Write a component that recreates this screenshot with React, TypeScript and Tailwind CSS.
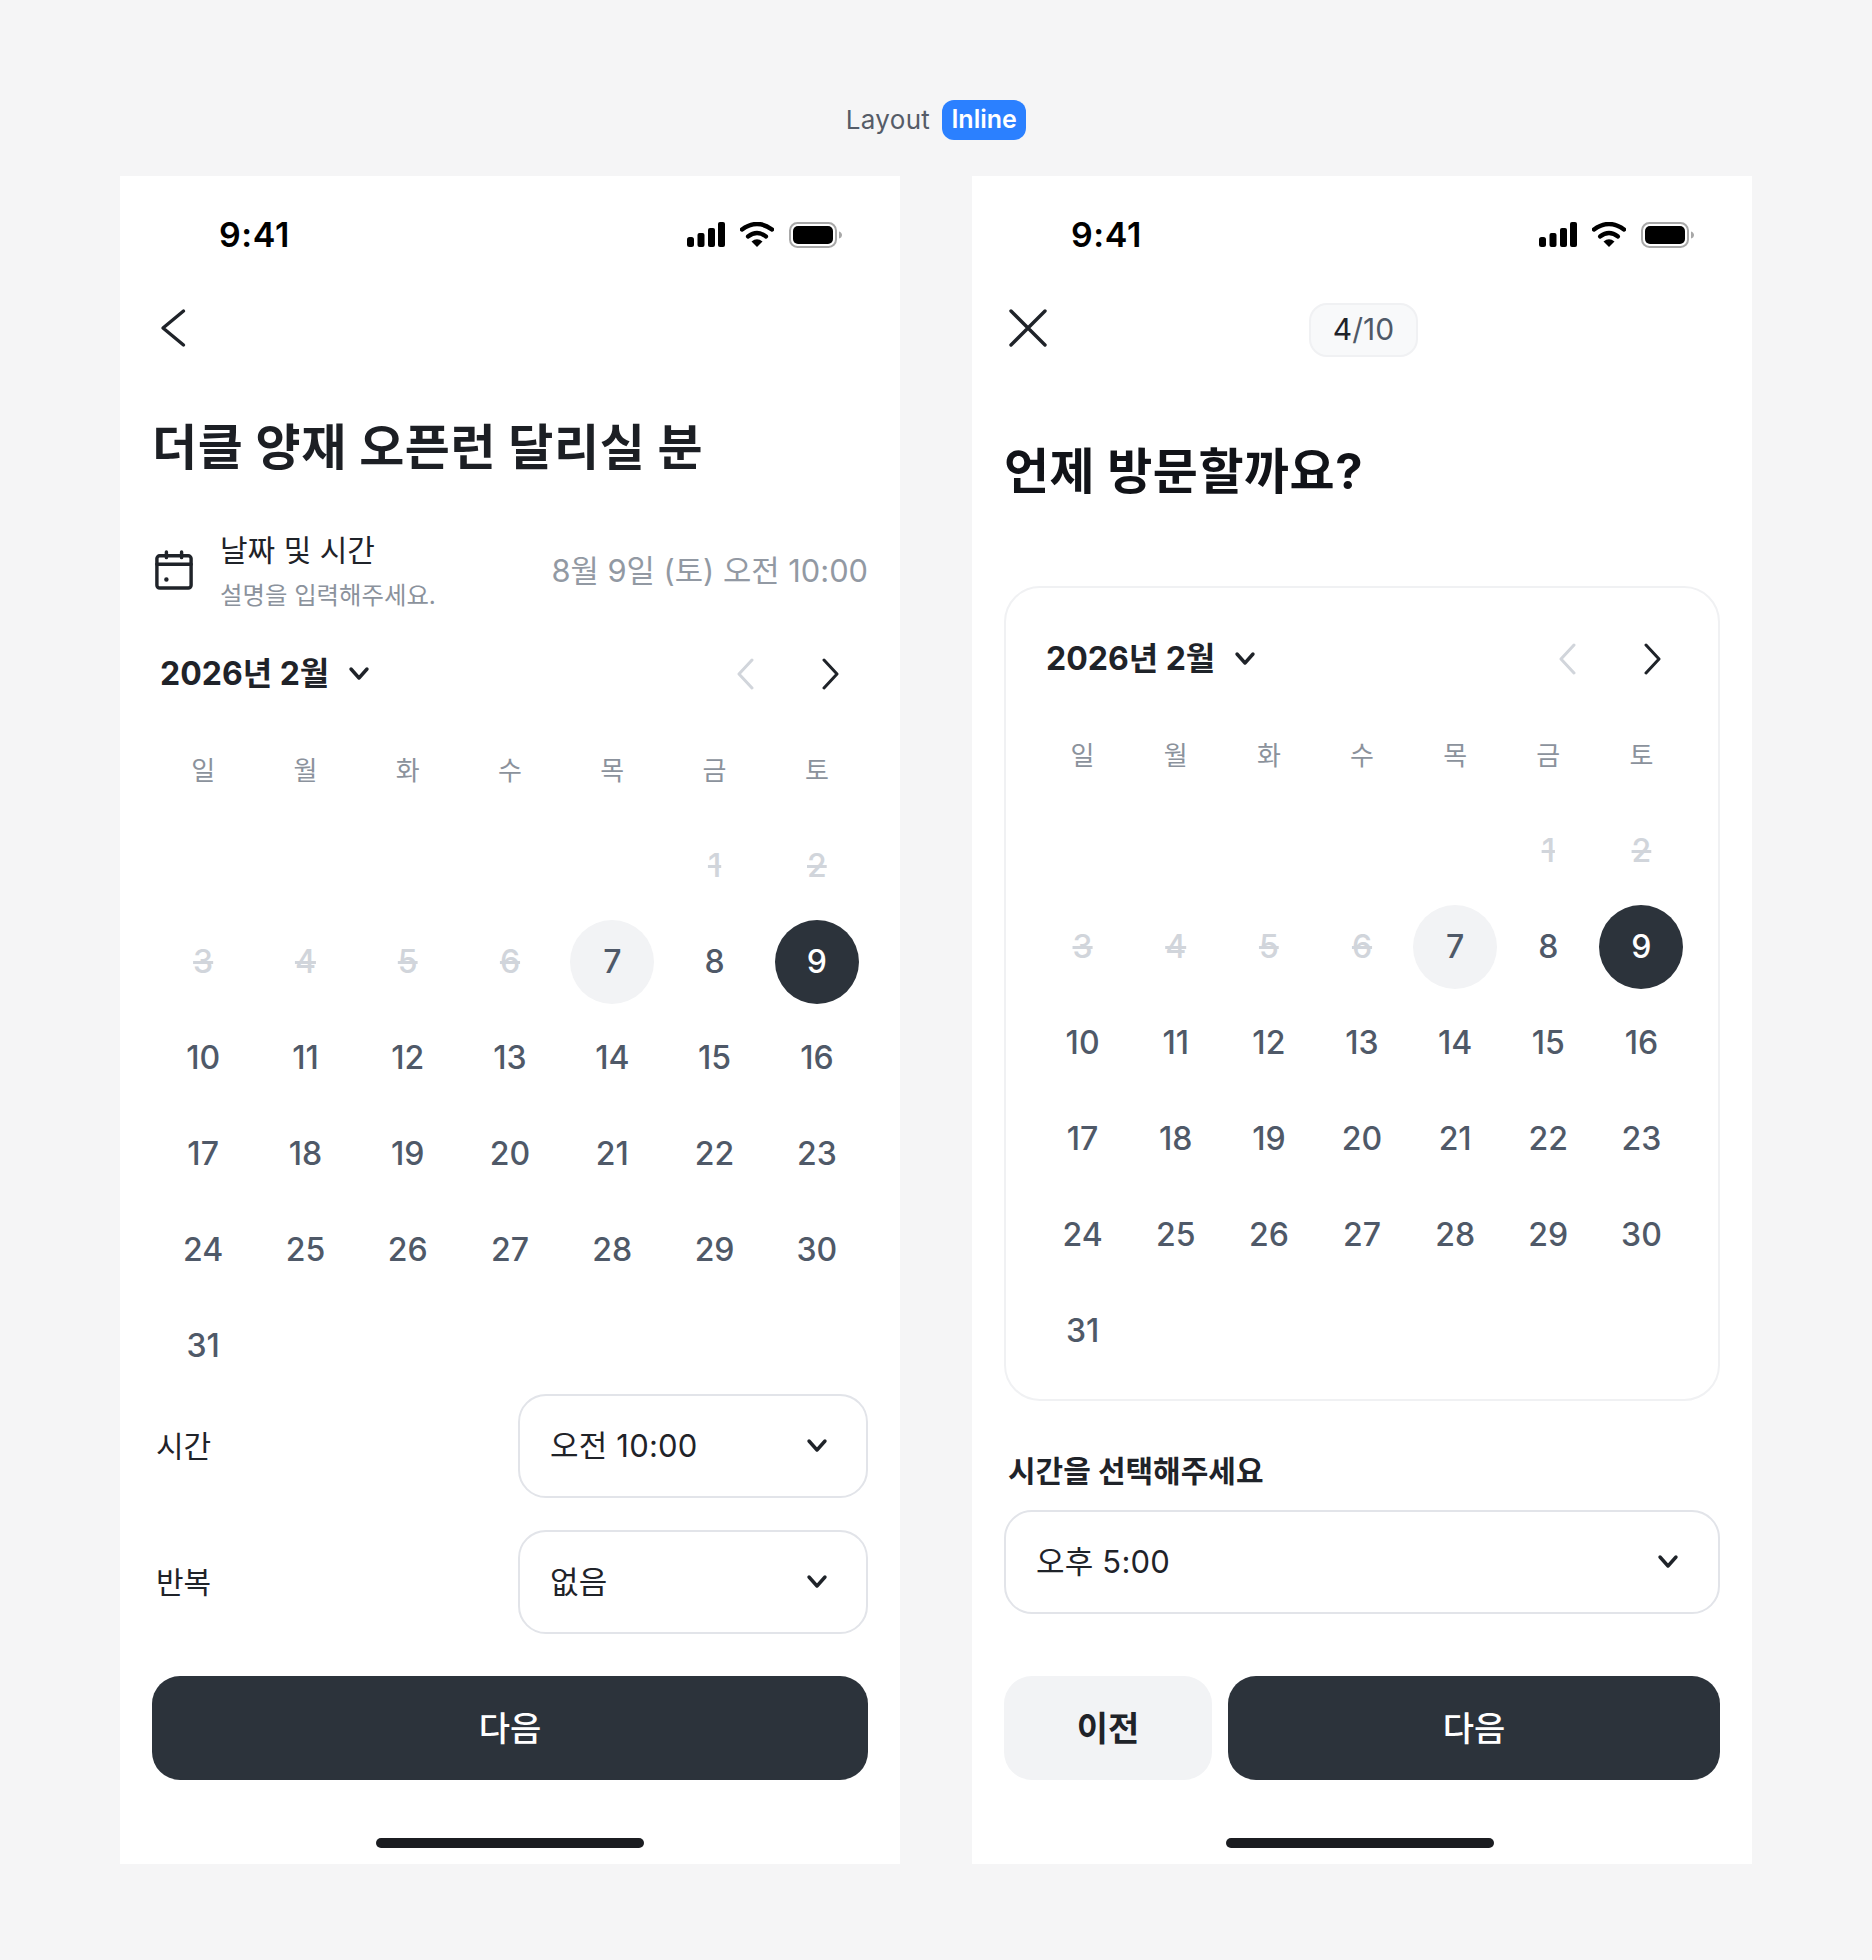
import React from 'react';

const FONT = "font-['Inter','Noto_Sans_CJK_KR',sans-serif]";
const WEEK = ['일', '월', '화', '수', '목', '금', '토'];
const DISABLED = [1, 2, 3, 4, 5, 6];

const StatusBar: React.FC = () => (
  <div className="flex h-[118px] shrink-0 items-center justify-between pl-[99px] pr-[57px]">
    <span className="text-[34px] font-semibold leading-none tracking-[0.6px] text-black">9:41</span>
    <div className="flex items-center">
      <svg width="38" height="26" viewBox="0 0 38 26" className="mr-[15px]">
        <rect x="0" y="15" width="7" height="10" rx="2.5" fill="#000" />
        <rect x="10.5" y="11" width="7" height="14" rx="2" fill="#000" />
        <rect x="21" y="6" width="7" height="19" rx="2" fill="#000" />
        <rect x="31" y="0" width="7" height="25" rx="2" fill="#000" />
      </svg>
      <svg width="34" height="26" viewBox="0 0 34 26" className="mr-[15px]">
        <path d="M2 7.5Q17 -3.5 32 7.5" fill="none" stroke="#000" strokeWidth="4.4" strokeLinecap="round" />
        <path d="M8 14.5Q17 7.5 26 14.5" fill="none" stroke="#000" strokeWidth="4.2" strokeLinecap="round" />
        <path d="M17 25L11.5 19.5Q17 15 22.5 19.5Z" fill="#000" />
      </svg>
      <svg width="54" height="26" viewBox="0 0 54 26">
        <rect x="1" y="1" width="46" height="24" rx="7.5" fill="none" stroke="#a8a8a8" strokeWidth="2" />
        <rect x="4" y="4" width="40" height="18" rx="5" fill="#000" />
        <path d="M50 9.5C52 10 53 11.5 53 13S52 16 50 16.5Z" fill="#a8a8a8" />
      </svg>
    </div>
  </div>
);

const Chevron: React.FC<{ dir: 'left' | 'right'; color?: string }> = ({ dir, color = '#1f2329' }) => (
  <svg width="24" height="32" viewBox="0 0 24 32" fill="none" stroke={color} strokeWidth="3" strokeLinecap="round" strokeLinejoin="round">
    <path d={dir === 'left' ? 'M18 2L5 16L18 30' : 'M6 2L19 16L6 30'} />
  </svg>
);

const ChevronDown: React.FC = () => (
  <svg width="24" height="16" viewBox="0 0 24 16" fill="none" stroke="#1f2329" strokeWidth="3.4" strokeLinecap="round" strokeLinejoin="round">
    <path d="M4 3L12 12L20 3" />
  </svg>
);

const MonthHeader: React.FC = () => (
  <div className="mb-6 flex h-12 items-center">
    <span className="text-[32px] font-bold leading-none text-[#1f2329]">2026년 2월</span>
    <span className="ml-[18px]"><ChevronDown /></span>
    <span className="ml-auto"><Chevron dir="left" color="#d1d5db" /></span>
    <span className="ml-[60px]"><Chevron dir="right" /></span>
  </div>
);

const Day: React.FC<{ day: number }> = ({ day }) => {
  if (day === 0) return <div className="h-24" />;
  let cls = 'text-[#4f5968]';
  if (DISABLED.includes(day)) cls = 'text-[#d1d5db] line-through';
  if (day === 7) cls = 'bg-[#f2f3f5] text-[#4f5968]';
  if (day === 9) cls = 'bg-[#2c333b] text-white';
  return (
    <div className="flex h-24 items-center justify-center">
      <span className={`flex h-[84px] w-[84px] items-center justify-center rounded-full text-[32px] font-medium ${cls}`}>{day}</span>
    </div>
  );
};

const Calendar: React.FC = () => {
  const days = [0, 0, 0, 0, 0, 1, 2, ...Array.from({ length: 29 }, (_, i) => i + 3)];
  return (
    <div className="grid grid-cols-7">
      {WEEK.map((w) => (
        <div key={w} className="flex h-24 items-center justify-center text-[26px] text-[#8b929c]">{w}</div>
      ))}
      {days.map((d, i) => <Day key={i} day={d} />)}
    </div>
  );
};

const Select: React.FC<{ value: string; className: string }> = ({ value, className }) => (
  <div className={`flex h-[104px] items-center rounded-[28px] border-2 border-[#e2e4e9] bg-white text-[31px] tracking-[0.2px] text-[#1f2329] ${className}`}>
    <span>{value}</span>
    <span className="ml-auto"><ChevronDown /></span>
  </div>
);

const HomeBar: React.FC<{ className: string }> = ({ className }) => (
  <div className={`mt-[58px] h-[10px] w-[268px] rounded-full bg-[#1b1d21] ${className}`} />
);

const LeftPhone: React.FC = () => (
  <div className="flex h-[1688px] w-[780px] flex-col bg-white">
    <StatusBar />
    <div className="flex h-[68px] shrink-0 items-center pl-[40px]">
      <svg width="26" height="40" viewBox="0 0 26 40" fill="none" stroke="#1f2329" strokeWidth="3.4" strokeLinecap="round" strokeLinejoin="round">
        <path d="M23.5 3L3 20L23.5 37" />
      </svg>
    </div>
    <div className="mx-8 mt-[53px] flex h-16 items-center">
      <h1 className="text-[49px] font-bold leading-none tracking-[0.6px] text-[#1c1f24]">더클 양재 오픈런 달리실 분</h1>
    </div>
    <div className="mx-8 mt-[46px] flex h-[94px] items-center">
      <svg width="38" height="40" viewBox="0 0 40 42" fill="none" stroke="#1f2329" strokeWidth="3.6" strokeLinecap="round" strokeLinejoin="round" className="ml-[3px] mr-[27px] mb-[4px]">
        <rect x="2" y="6" width="36" height="34" rx="3" />
        <path d="M2 15H38M12 2V8M28 2V8" />
        <circle cx="12" cy="31" r="1.6" fill="#1f2329" stroke="#1f2329" strokeWidth="1.5" />
      </svg>
      <div className="flex flex-col">
        <span className="text-[30px] leading-[44px] text-[#1f2329]">날짜 및 시간</span>
        <span className="pt-[1px] text-[24.4px] leading-[44px] text-[#8b929c]">설명을 입력해주세요.</span>
      </div>
      <span className="mb-[2px] ml-auto text-[30.8px] text-[#9299a3]">8월 9일 (토) 오전 10:00</span>
    </div>
    <div className="ml-10 mr-[58px] mt-[31px]">
      <MonthHeader />
    </div>
    <div className="mx-8">
      <Calendar />
    </div>
    <div className="mx-8 flex items-center justify-between">
      <span className="pl-[4px] text-[30px] text-[#1f2329]">시간</span>
      <Select value="오전 10:00" className="w-[350px] pl-[30px] pr-[37px]" />
    </div>
    <div className="mx-8 mt-8 flex items-center justify-between">
      <span className="pl-[4px] text-[30px] text-[#1f2329]">반복</span>
      <Select value="없음" className="w-[350px] pl-[30px] pr-[37px]" />
    </div>
    <button className="mx-8 mt-[42px] flex h-[104px] shrink-0 items-center justify-center rounded-[28px] bg-[#2c333b] text-[34px] font-medium text-white">다음</button>
    <HomeBar className="ml-[256px]" />
  </div>
);

const RightPhone: React.FC = () => (
  <div className="flex h-[1688px] w-[780px] flex-col bg-white">
    <StatusBar />
    <div className="flex h-[68px] shrink-0 items-center pl-[36px]">
      <svg width="40" height="40" viewBox="0 0 40 40" fill="none" stroke="#1f2329" strokeWidth="3.4" strokeLinecap="round">
        <path d="M3 3L37 37M37 3L3 37" />
      </svg>
      <div className="ml-[261px] mt-[3px] flex h-[54px] w-[109px] items-center justify-center rounded-[18px] border-2 border-[#f0f1f3] bg-[#f8f9fa] text-[30px]">
        <span className="text-[#1f2329]">4</span>
        <span className="text-[#4f5968]">/10</span>
      </div>
    </div>
    <div className="mx-8 mt-[77px] flex h-16 items-center">
      <h1 className="text-[49px] font-bold leading-none tracking-[0.5px] text-[#111318]">언제 방문할까요?</h1>
    </div>
    <div className="mx-8 mt-[83px] h-[815px] rounded-[36px] border-2 border-[#f0f1f3] px-[30px] pb-[20px] pt-[47px]">
      <div className="pl-[10px] pr-[24px]">
        <MonthHeader />
      </div>
      <Calendar />
    </div>
    <div className="mx-8 mt-[50px] flex h-10 items-center pl-[4px] text-[30px] font-bold text-[#1f2329]">시간을 선택해주세요</div>
    <Select value="오후 5:00" className="mx-8 mt-[19px] shrink-0 pl-[30px] pr-[38px]" />
    <div className="mx-8 mt-[62px] flex shrink-0 gap-4">
      <button className="flex h-[104px] w-[208px] items-center justify-center rounded-[28px] bg-[#f2f3f5] text-[34px] font-bold text-[#1f2329]">이전</button>
      <button className="flex h-[104px] flex-1 items-center justify-center rounded-[28px] bg-[#2c333b] text-[34px] font-medium text-white">다음</button>
    </div>
    <HomeBar className="ml-[254px]" />
  </div>
);

const App: React.FC = () => (
  <div className={`h-[1960px] w-[1872px] bg-[#f5f5f6] ${FONT}`}>
    <div className="flex h-[176px] items-start justify-center pt-[100px]">
      <span className="mr-[12px] text-[26px] leading-10 tracking-[0.3px] text-[#555c68]">Layout</span>
      <span className="flex h-10 w-[84px] items-center justify-center rounded-[12px] bg-[#2b80ff] text-[25px] font-semibold text-white">Inline</span>
    </div>
    <div className="flex justify-center gap-[72px]">
      <LeftPhone />
      <RightPhone />
    </div>
  </div>
);

export default App;
